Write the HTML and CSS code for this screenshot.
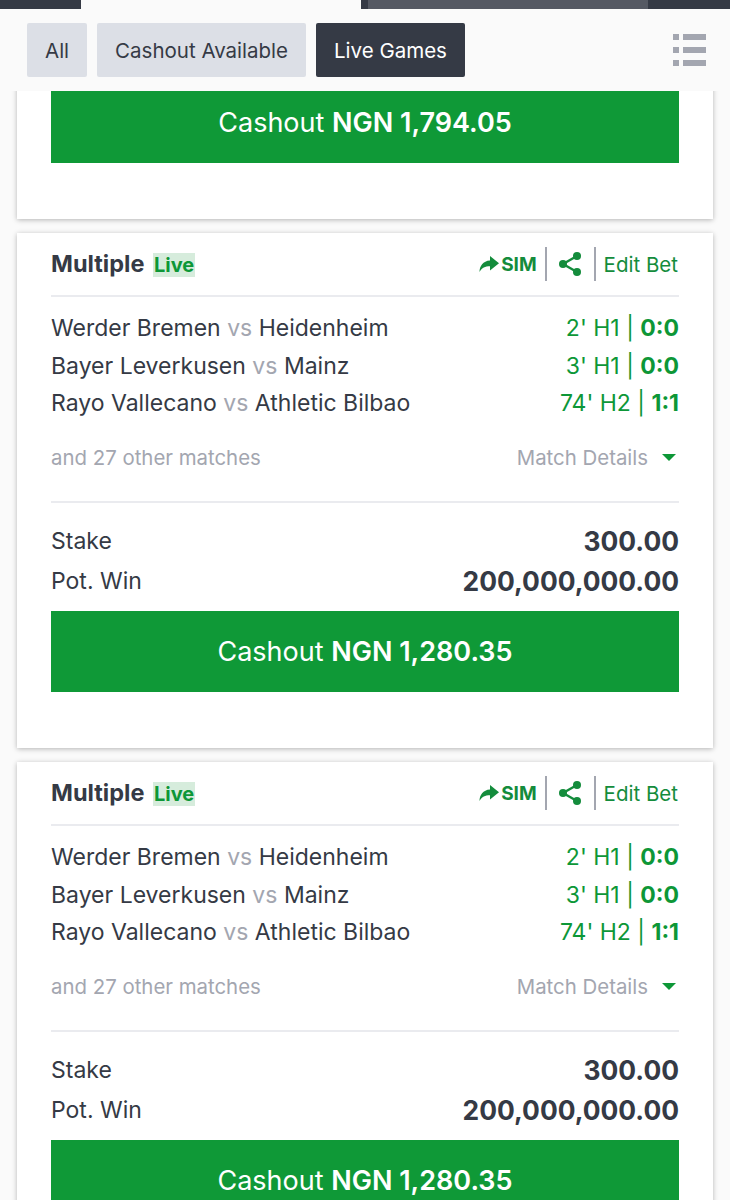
FILE: index.html
```html
<!DOCTYPE html>
<html lang="en">
<head>
    <meta charset="UTF-8">
    <meta name="viewport" content="width=device-width, initial-scale=1.0">
    <title>Open Bets</title>
    <link rel="stylesheet" href="styles.css">
</head>
<body>
    <div class="topbar">
        <div class="topbar-dark topbar-left"></div>
        <div class="topbar-tab"></div>
        <div class="topbar-dark topbar-gap"></div>
        <div class="topbar-grey"></div>
        <div class="topbar-dark topbar-right"></div>
    </div>

    <div class="filters">
        <button class="filter">All</button>
        <button class="filter">Cashout Available</button>
        <button class="filter filter-active">Live Games</button>
        <div class="list-icon">
            <span class="dot"></span><span class="line"></span>
            <span class="dot"></span><span class="line"></span>
            <span class="dot"></span><span class="line"></span>
        </div>
    </div>

    <div class="bets">
        <div class="card card-cut">
            <button class="cashout">Cashout <b>NGN 1,794.05</b></button>
        </div>

        <div class="card">
            <div class="card-head">
                <div class="title">Multiple <span class="live">Live</span></div>
                <div class="actions">
                    <span class="sim">
                        <svg class="sim-icon" viewBox="0 0 20 16"><path d="M11 0 L20 7.2 L11 14.4 V10.2 C6 10.2 3 11.5 0.5 16 C0.5 10 4 4.8 11 4.4 Z"/></svg>
                        SIM
                    </span>
                    <span class="share">
                        <svg class="share-icon" viewBox="0 0 24 26"><path class="share-lines" d="M19 5 L5 13 L19 21"/><circle cx="19" cy="5" r="4"/><circle cx="5" cy="13" r="4"/><circle cx="19" cy="21" r="4"/></svg>
                    </span>
                    <span class="edit">Edit Bet</span>
                </div>
            </div>
            <div class="matches">
                <div class="match"><span>Werder Bremen <i>vs</i> Heidenheim</span><span class="score">2' H1 | <b>0:0</b></span></div>
                <div class="match"><span>Bayer Leverkusen <i>vs</i> Mainz</span><span class="score">3' H1 | <b>0:0</b></span></div>
                <div class="match"><span>Rayo Vallecano <i>vs</i> Athletic Bilbao</span><span class="score">74' H2 | <b>1:1</b></span></div>
            </div>
            <div class="more">
                <span>and 27 other matches</span>
                <span class="details">Match Details <span class="caret"></span></span>
            </div>
            <div class="totals">
                <div class="total"><span>Stake</span><b>300.00</b></div>
                <div class="total"><span>Pot. Win</span><b>200,000,000.00</b></div>
            </div>
            <button class="cashout">Cashout <b>NGN 1,280.35</b></button>
        </div>

        <div class="card">
            <div class="card-head">
                <div class="title">Multiple <span class="live">Live</span></div>
                <div class="actions">
                    <span class="sim">
                        <svg class="sim-icon" viewBox="0 0 20 16"><path d="M11 0 L20 7.2 L11 14.4 V10.2 C6 10.2 3 11.5 0.5 16 C0.5 10 4 4.8 11 4.4 Z"/></svg>
                        SIM
                    </span>
                    <span class="share">
                        <svg class="share-icon" viewBox="0 0 24 26"><path class="share-lines" d="M19 5 L5 13 L19 21"/><circle cx="19" cy="5" r="4"/><circle cx="5" cy="13" r="4"/><circle cx="19" cy="21" r="4"/></svg>
                    </span>
                    <span class="edit">Edit Bet</span>
                </div>
            </div>
            <div class="matches">
                <div class="match"><span>Werder Bremen <i>vs</i> Heidenheim</span><span class="score">2' H1 | <b>0:0</b></span></div>
                <div class="match"><span>Bayer Leverkusen <i>vs</i> Mainz</span><span class="score">3' H1 | <b>0:0</b></span></div>
                <div class="match"><span>Rayo Vallecano <i>vs</i> Athletic Bilbao</span><span class="score">74' H2 | <b>1:1</b></span></div>
            </div>
            <div class="more">
                <span>and 27 other matches</span>
                <span class="details">Match Details <span class="caret"></span></span>
            </div>
            <div class="totals">
                <div class="total"><span>Stake</span><b>300.00</b></div>
                <div class="total"><span>Pot. Win</span><b>200,000,000.00</b></div>
            </div>
            <button class="cashout">Cashout <b>NGN 1,280.35</b></button>
        </div>
    </div>
</body>
</html>
```

FILE: styles.css
```css
html, body {
    margin: 0;
    height: 1200px;
    overflow: hidden;
}
body {
    font-family: Inter, "Liberation Sans", sans-serif;
    background-color: #fafafa;
    color: #353a45;
}
button {
    font-family: inherit;
    border: none;
    padding: 0;
}
b {
    font-weight: 700;
}
.topbar {
    display: flex;
    height: 9px;
}
.topbar-dark {
    background-color: #353a45;
}
.topbar-left {
    width: 81px;
}
.topbar-tab {
    width: 280px;
    background-color: #fafafa;
}
.topbar-gap {
    width: 7px;
}
.topbar-grey {
    width: 280px;
    background-color: #555963;
}
.topbar-right {
    flex: 1;
}
.filters {
    position: relative;
    z-index: 1;
    display: flex;
    align-items: center;
    gap: 10px;
    height: 82px;
    padding: 0 24px 0 27px;
    box-sizing: border-box;
    background-color: #fafafa;
}
.filter {
    height: 54px;
    padding: 0 18px;
    font-size: 20.5px;
    border-radius: 2px;
    background-color: #dcdfe6;
    color: #353a45;
}
.filter-active {
    background-color: #353a45;
    color: #fff;
}
.list-icon {
    display: grid;
    grid-template-columns: 6px 23px;
    column-gap: 4px;
    row-gap: 7px;
    margin-left: auto;
}
.dot, .line {
    height: 6px;
    background-color: #a3a6b0;
}
.bets {
    display: flex;
    flex-direction: column;
    gap: 14px;
    padding: 0 17px;
}
.card {
    flex-shrink: 0;
    padding: 0 34px 56px;
    background-color: #fff;
    box-shadow: 0 1px 5px rgba(0, 0, 0, 0.28);
}
/* first card is scrolled under the filter bar */
.card-cut {
    margin-top: -9px;
}
.card-head {
    display: flex;
    align-items: center;
    justify-content: space-between;
    height: 62px;
    border-bottom: 2px solid #eaebef;
}
.title {
    padding-bottom: 1px;
    font-size: 23.5px;
    font-weight: 700;
}
.live {
    display: inline-block;
    margin-left: 3px;
    padding: 0 1px;
    font-size: 20px;
    line-height: 24px;
    color: #0d9737;
    background-color: #d6ecdc;
}
.actions {
    display: flex;
    align-items: center;
    padding-right: 1px;
    color: #148c3c;
    font-size: 20.5px;
}
.sim {
    display: flex;
    align-items: center;
    gap: 2px;
    height: 34px;
    padding-right: 8px;
    border-right: 2px solid #a3a6b0;
    font-size: 19px;
    font-weight: 700;
}
.sim-icon {
    width: 20px;
    height: 16px;
    fill: #148c3c;
}
.share {
    display: flex;
    align-items: center;
    height: 34px;
    padding: 0 12px 0 11px;
    border-right: 2px solid #a3a6b0;
}
.share-icon {
    width: 24px;
    height: 26px;
    fill: #148c3c;
}
.share-lines {
    fill: none;
    stroke: #148c3c;
    stroke-width: 2.4;
}
.edit {
    padding-left: 8px;
}
.matches {
    padding-top: 13px;
}
.match {
    display: flex;
    justify-content: space-between;
    font-size: 23px;
    line-height: 37.5px;
}
.match i {
    font-style: normal;
    color: #a3a6b0;
}
.score {
    color: #0d9737;
}
.more {
    display: flex;
    justify-content: space-between;
    align-items: center;
    height: 80.5px;
    padding-bottom: 9.5px;
    box-sizing: border-box;
    font-size: 20.4px;
    color: #a3a6b0;
    border-bottom: 2px solid #eaebef;
}
.details {
    display: flex;
    align-items: center;
    gap: 14px;
    padding-right: 3px;
}
.caret {
    width: 0;
    height: 0;
    border-left: 7px solid transparent;
    border-right: 7px solid transparent;
    border-top: 7px solid #0d9737;
}
.totals {
    padding: 18px 0 10px;
}
.total {
    display: flex;
    justify-content: space-between;
    align-items: center;
    height: 40px;
    font-size: 23px;
}
.total b {
    font-size: 26.4px;
}
.cashout {
    display: block;
    width: 100%;
    height: 81px;
    font-size: 27px;
    color: #fff;
    background-color: #0f9937;
}
.cashout b {
    font-weight: 600;
}
```
